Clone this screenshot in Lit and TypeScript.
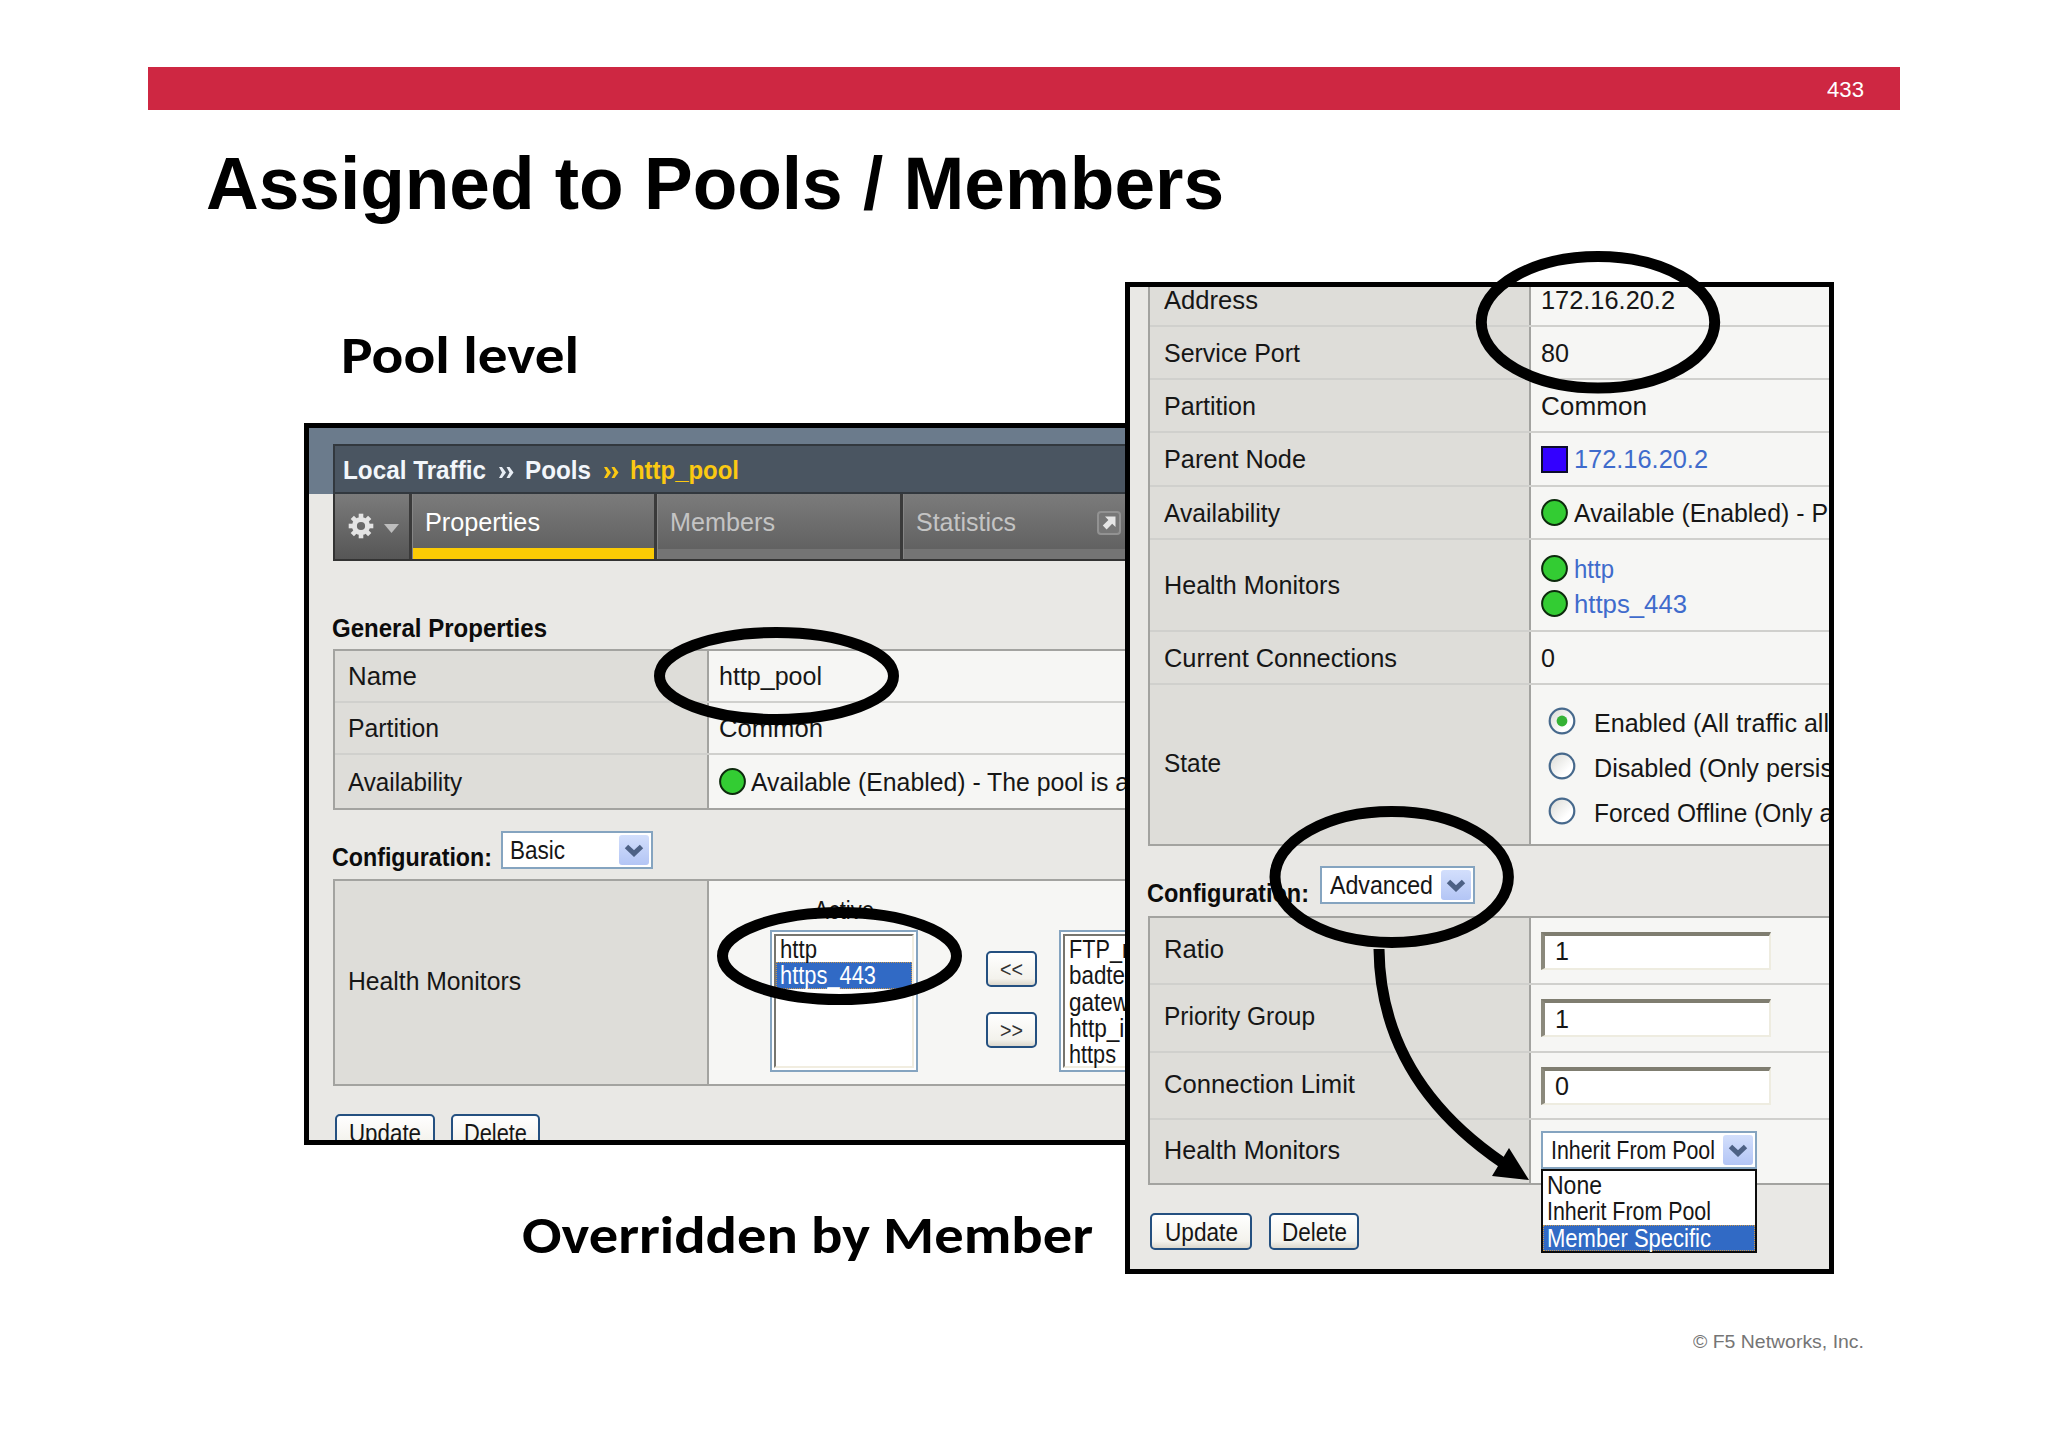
import { LitElement, html, css, svg } from "lit";
import { customElement, property } from "lit/decorators.js";

/** A single line of text condensed or stretched to an exact advance width. */
@customElement("fit-text")
class FitText extends LitElement {
  static styles = css`
    :host { display: inline-block; white-space: nowrap; flex: none; }
    .line { display: inline-block; transform-origin: 0 50%; white-space: pre; }
  `;
  @property({ type: Number }) w = 0;
  @property() text = "";
  render() {
    return html`<span class="line">${this.text}</span>`;
  }
  updated() {
    const line = this.renderRoot.querySelector(".line") as HTMLElement;
    line.style.transform = "none";
    const natural = line.getBoundingClientRect().width;
    this.style.width = `${this.w}px`;
    if (natural > 0) line.style.transform = `scaleX(${this.w / natural})`;
  }
}

const t = (text: string, w: number) => html`<fit-text .text=${text} .w=${w}></fit-text>`;

const green = html`<svg class="dot" width="27" height="27" viewBox="0 0 27 27">
  <circle cx="13.5" cy="13.5" r="12.4" fill="#33cc33" stroke="#0d2a0d" stroke-width="2" />
</svg>`;
const square = html`<svg class="dot" width="27" height="27" viewBox="0 0 27 27">
  <rect x="1" y="1" width="25" height="25" fill="#3300ff" stroke="#0c0c2c" stroke-width="2" />
</svg>`;
const chevron = html`<span class="drop"><svg width="30" height="30" viewBox="0 0 30 30">
  <path d="M7.5 11.5 L15 18.5 L22.5 11.5" fill="none" stroke="#4d6185" stroke-width="5" />
</svg></span>`;

const teeth = [0, 45, 90, 135, 180, 225, 270, 315];
const gear = html`<svg width="26" height="26" viewBox="-13 -13 26 26">
  ${teeth.map((a) => svg`<rect x="-2.3" y="-12.3" width="4.6" height="6" fill="#e4e4e4" transform="rotate(${a})" />`)}
  <circle r="6.6" fill="none" stroke="#e4e4e4" stroke-width="5" />
</svg>`;
const popout = html`<svg width="24" height="24" viewBox="0 0 24 24">
  <rect x="1" y="1" width="22" height="22" rx="3" fill="#777" stroke="#929292" stroke-width="2" />
  <path d="M8 5.5 H18.5 V16 L15.2 12.8 L9.6 18.4 L5.8 14.6 L11.4 9 Z" fill="#e6e6e6" />
</svg>`;

const radio = (on: boolean) => html`<svg class="radio" width="28" height="28" viewBox="0 0 28 28">
  <defs>
    <linearGradient id="g" x1="0" y1="0" x2="1" y2="1">
      <stop offset="0" stop-color="#d9d9d4" /><stop offset="0.7" stop-color="#ffffff" />
    </linearGradient>
  </defs>
  <circle cx="14" cy="14" r="12.3" fill="url(#g)" stroke="#47698c" stroke-width="2.2" />
  ${on ? svg`<circle cx="14" cy="14" r="5.4" fill="#35b235" />` : ""}
</svg>`;

const row = (size: string, label: unknown, value: unknown) => html`
  <div class="row ${size}"><div class="key">${label}</div><div class="val">${value}</div></div>
`;

@customElement("app-root")
class AppRoot extends LitElement {
  static styles = css`
    :host { display: block; }
    * { box-sizing: border-box; }
    svg { display: block; flex: none; }
    .slide {
      position: relative; width: 2048px; height: 1447px; overflow: hidden; background: #fff;
      display: flex; flex-direction: column; color: #000;
      font-family: "Liberation Sans", Arial, sans-serif;
    }
    .bar {
      margin: 67px 148px 0; height: 43px; padding-right: 36px; background: #ce2742; color: #fff;
      display: flex; align-items: center; justify-content: flex-end; font-size: 22px; line-height: 43px;
      flex: none; padding-top: 1px;
    }
    .title { margin: 33px 0 0 206px; height: 80px; font-size: 75px; line-height: 80px; font-weight: 700; flex: none; }
    .stage { display: flex; align-items: flex-start; margin: 59px 0 0 304px; height: 992px; flex: none; }
    .left { width: 821px; display: flex; flex-direction: column; }
    .caption { font-family: Carlito, Lato, "Open Sans", sans-serif; font-weight: 700; font-size: 53px; line-height: 60px; height: 60px; }
    .caption-pool { margin: 43px 0 38px 37px; }
    .caption-member { margin: 60px 0 0 218px; }
    .footer { margin: 56px 184px 0 auto; font-size: 19px; line-height: 24px; color: #757575; }

    .panel {
      border: 5px solid #000; background: #e9e8e5; overflow: hidden; flex: none;
      font-size: 26.5px; line-height: 30px; color: #161616;
    }
    .pool { height: 722px; border-right: 0; }
    .member { width: 709px; height: 992px; padding-left: 18px; }

    .band { height: 66px; padding: 16px 0 0 24px; background: #6b7b8c; }
    .crumbs {
      height: 50px; border: 2px solid #32383e; border-right: 0; background: #4a5561; color: #f2f6fb;
      font-weight: 700; font-size: 26px; display: flex; align-items: center; padding: 1px 0 0 8px;
    }
    .crumbs .here { color: #fbc912; }
    .sep { margin: 0 11px 0 12px; display: flex; padding-top: 5px; }
    .tabs { margin-left: 24px; height: 67px; border: 2px solid #333; border-top: 0; border-right: 0; display: flex; }
    .tab {
      height: 65px; background: linear-gradient(#7b7b7b, #626262 54px, #626262 55px, #747474 55px);
      border-right: 3px solid #3a3a3a; padding: 13px 0 0 12px; color: #c4c4c4; flex: none; display: flex;
      border-left: 1px solid #858585;
    }
    .tab.gear { width: 77px; padding: 19px 0 0 13px; align-items: flex-start; border-left: 0;
      background: linear-gradient(#7b7b7b, #565656); }
    .tab.on { width: 245px; color: #fff; background: linear-gradient(#7b7b7b, #626262 54px, #fbcb04 54px); }
    .tab.mid { width: 246px; }
    .tab.last { width: 240px; border-right: 0; }
    .tri { margin: 11px 0 0 10px; }
    .popout { margin: 4px 0 0 81px; }

    .heading { font-weight: 700; font-size: 26px; color: #0c0c0c; }
    .gp { margin: 52px 0 6px 23px; height: 30px; }
    .table { border: 2px solid #a3a3a0; border-right: 0; background: #f6f6f4; }
    .pool .table { margin-left: 24px; }
    .member .first { border-top: 0; }
    .row { display: flex; border-bottom: 2px solid #d0d0cd; }
    .row:last-child { border-bottom: 0; }
    .key { background: #deddd9; border-right: 2px solid #a3a3a0; display: flex; align-items: center; flex: none; padding-left: 13px; }
    .pool .key { width: 374px; }
    .member .key { width: 381px; padding-left: 14px; }
    .val { flex: 1; min-width: 0; display: flex; align-items: center; padding-left: 10px; overflow: hidden; white-space: nowrap; }
    .link { color: #3f6bcc; display: inline-flex; }
    .dot { margin-right: 6px; }
    .pool .val .dot { margin-right: 5px; }
    .h52 { height: 52px; } .h53 { height: 53px; } .h54 { height: 54px; } .h92 { height: 92px; } .h159 { height: 159px; }
    .h40 { height: 40px; } .h68 { height: 68px; } .h67 { height: 67px; } .h63 { height: 63px; } .h203 { height: 203px; }
    .h40 > div { padding-bottom: 12px; }
    .h159 .key, .h203 .key, .h67 .key, .h68 .key { padding-bottom: 4px; }
    .h63 > div { padding-bottom: 3px; }
    .stack { display: flex; flex-direction: column; gap: 8px; padding-top: 2px; }
    .line { display: flex; align-items: center; height: 27px; }
    .radios { display: flex; flex-direction: column; gap: 17px; padding: 2px 0 0 7px; }
    .opt { display: flex; height: 28px; }
    .radio { margin-right: 18px; }
    .opt fit-text { padding-top: 1px; }

    .config { display: flex; height: 69px; padding: 21px 0 0 23px; gap: 9px; }
    .config .heading { padding-top: 11px; }
    .member .config { height: 70px; padding: 20px 0 0 0; gap: 11px; margin-left: -1px; }
    .member .config .heading { padding-top: 12px; }
    .select {
      height: 38px; background: #fff; border: 2px solid #85a4c0; display: flex; align-items: center;
      justify-content: space-between; padding: 0 2px 0 8px; flex: none;
    }
    .drop { width: 30px; height: 30px; border-radius: 3px; background: linear-gradient(#d3dffc, #b3c5f5); flex: none; }
    .s-basic { width: 152px; padding-left: 7px; }
    .s-adv { width: 155px; }
    .s-inherit { width: 216px; }
    .picker { display: flex; align-items: flex-start; height: 203px; padding-left: 51px; }
    .active { width: 148px; display: flex; flex-direction: column; align-items: center; padding-top: 14px; }
    .list { width: 148px; height: 142px; border: 2px solid #85a4c0; background: #fff; padding: 2px; flex: none; }
    .active .list { margin-top: 5px; }
    .available { margin: 49px 0 0 22px; }
    .well { height: 134px; border: 2px solid #77756f; border-right-color: #f1ede0; border-bottom-color: #f1ede0; line-height: 26.3px; }
    .item { height: 26.3px; padding-left: 4px; display: flex; }
    .picked { background: #316ac5; color: #fff; outline: 1px dotted #c9974a; outline-offset: -1px; }
    .moves { display: flex; flex-direction: column; gap: 25px; margin: 70px 0 0 68px; }
    .btn {
      height: 37px; border: 2.5px solid #245080; border-radius: 5px; display: flex; align-items: center; justify-content: center;
      background: linear-gradient(#fff, #f3f2ec 80%, #dcd8cd); flex: none;
    }
    .move { width: 51px; height: 36px; font-size: 22px; color: #333; padding-top: 2px; }
    .buttons { display: flex; gap: 16px; }
    .pool .buttons { margin: 28px 0 0 26px; }
    .member .buttons { margin: 28px 0 0 2px; gap: 17px; }
    .b-up { width: 100px; } .b-del { width: 89px; }
    .member .b-up { width: 102px; } .member .b-del { width: 90px; }
    .field {
      width: 230px; height: 38px; background: #fff; border: 2px solid #eeece0; border-top: 4px solid #7f7d70;
      border-left: 4px solid #8b897c; padding: 0 0 1px 10px; display: flex; align-items: center;
    }
    .combo { position: relative; }
    .menu { position: absolute; left: 0; top: 38px; width: 216px; height: 84px; border: 2px solid #0c0c0c; background: #fff; padding-top: 1px; }
    .menu .item { padding-left: 4px; line-height: 27px; }
    .open { overflow: visible; }
    .marks { position: absolute; left: 0; top: 0; }
  `;

  private poolPanel() {
    return html`<section class="panel pool">
      <div class="band">
        <div class="crumbs">
          ${t("Local Traffic", 143)}
          <span class="sep"><svg width="16" height="15" viewBox="0 0 16 15"><path d="M1 2 H4 L8 7.5 L4 13 H1 L4 7.5Z M8.5 2 H11.5 L15.5 7.5 L11.5 13 H8.5 L11.5 7.5Z" fill="#e8eef5" /></svg></span>
          ${t("Pools", 66)}
          <span class="sep"><svg width="16" height="15" viewBox="0 0 16 15"><path d="M1 2 H4 L8 7.5 L4 13 H1 L4 7.5Z M8.5 2 H11.5 L15.5 7.5 L11.5 13 H8.5 L11.5 7.5Z" fill="#fbc912" /></svg></span>
          <span class="here">${t("http_pool", 109)}</span>
        </div>
      </div>
      <div class="tabs">
        <div class="tab gear">${gear}<svg class="tri" width="15" height="9" viewBox="0 0 15 9"><path d="M0 0 H15 L7.5 9Z" fill="#bdbdbd" /></svg></div>
        <div class="tab on">${t("Properties", 115)}</div>
        <div class="tab mid">${t("Members", 105)}</div>
        <div class="tab last">${t("Statistics", 100)}<span class="popout">${popout}</span></div>
      </div>
      <div class="heading gp">${t("General Properties", 215)}</div>
      <div class="table">
        ${row("h52", t("Name", 69), t("http_pool", 103))}
        ${row("h52", t("Partition", 91), t("Common", 104))}
        ${row("h53", t("Availability", 114), html`${green}${t("Available (Enabled) - The pool is a", 378)}`)}
      </div>
      <div class="config">
        <span class="heading">${t("Configuration:", 160)}</span>
        <div class="select s-basic">${t("Basic", 55)}${chevron}</div>
      </div>
      <div class="table">
        ${row("h203", t("Health Monitors", 173), html`
          <div class="picker">
            <div class="active">
              ${t("Active", 60)}
              <div class="list"><div class="well">
                <div class="item">${t("http", 37)}</div>
                <div class="item picked">${t("https_443", 96)}</div>
              </div></div>
            </div>
            <div class="moves">
              <div class="btn move">${t("<<", 23)}</div>
              <div class="btn move">${t(">>", 23)}</div>
            </div>
            <div class="list available"><div class="well">
              <div class="item">${t("FTP_m", 71)}</div>
              <div class="item">${t("badte", 56)}</div>
              <div class="item">${t("gatew", 60)}</div>
              <div class="item">${t("http_in", 68)}</div>
              <div class="item">${t("https", 47)}</div>
            </div></div>
          </div>`)}
      </div>
      <div class="buttons">
        <div class="btn b-up">${t("Update", 72)}</div>
        <div class="btn b-del">${t("Delete", 63)}</div>
      </div>
    </section>`;
  }

  private memberPanel() {
    return html`<section class="panel member">
      <div class="table first">
        ${row("h40", t("Address", 94), t("172.16.20.2", 134))}
        ${row("h53", t("Service Port", 136), t("80", 28))}
        ${row("h53", t("Partition", 92), t("Common", 106))}
        ${row("h54", t("Parent Node", 142), html`${square}<span class="link">${t("172.16.20.2", 134)}</span>`)}
        ${row("h53", t("Availability", 116), html`${green}${t("Available (Enabled) - P", 254)}`)}
        ${row("h92", t("Health Monitors", 176), html`<div class="stack link">
          <div class="line">${green}${t("http", 40)}</div>
          <div class="line">${green}${t("https_443", 113)}</div>
        </div>`)}
        ${row("h53", t("Current Connections", 233), t("0", 14))}
        ${row("h159", t("State", 57), html`<div class="radios">
          <div class="opt">${radio(true)}${t("Enabled (All traffic all", 235)}</div>
          <div class="opt">${radio(false)}${t("Disabled (Only persis", 239)}</div>
          <div class="opt">${radio(false)}${t("Forced Offline (Only a", 239)}</div>
        </div>`)}
      </div>
      <div class="config">
        <span class="heading">${t("Configuration:", 162)}</span>
        <div class="select s-adv">${t("Advanced", 103)}${chevron}</div>
      </div>
      <div class="table">
        ${row("h67", t("Ratio", 60), html`<div class="field">${t("1", 14)}</div>`)}
        ${row("h68", t("Priority Group", 151), html`<div class="field">${t("1", 14)}</div>`)}
        ${row("h67", t("Connection Limit", 191), html`<div class="field">${t("0", 14)}</div>`)}
        <div class="row h63">
          <div class="key">${t("Health Monitors", 176)}</div>
          <div class="val open"><div class="combo">
            <div class="select s-inherit">${t("Inherit From Pool", 164)}${chevron}</div>
            <div class="menu">
              <div class="item">${t("None", 55)}</div>
              <div class="item">${t("Inherit From Pool", 164)}</div>
              <div class="item picked">${t("Member Specific", 164)}</div>
            </div>
          </div></div>
        </div>
      </div>
      <div class="buttons">
        <div class="btn b-up">${t("Update", 73)}</div>
        <div class="btn b-del">${t("Delete", 65)}</div>
      </div>
    </section>`;
  }

  render() {
    return html`<main class="slide">
      <div class="bar">${t("433", 37)}</div>
      <div class="title">${t("Assigned to Pools / Members", 1018)}</div>
      <div class="stage">
        <div class="left">
          <div class="caption caption-pool">${t("Pool level", 238)}</div>
          ${this.poolPanel()}
          <div class="caption caption-member">${t("Overridden by Member", 571)}</div>
        </div>
        ${this.memberPanel()}
      </div>
      <div class="footer">${t("© F5 Networks, Inc.", 171)}</div>
      <svg class="marks" width="2048" height="1447" viewBox="0 0 2048 1447" fill="none" stroke="#000" stroke-width="11">
        <ellipse cx="776.5" cy="676" rx="117" ry="43.5" />
        <ellipse cx="839.5" cy="956" rx="117" ry="43.5" />
        <ellipse cx="1598" cy="322.3" rx="116.7" ry="65.7" />
        <ellipse cx="1391.7" cy="877" rx="116.7" ry="65.5" />
        <path d="M1379 949 C1380 1040 1425 1110 1503 1163" />
        <path d="M1529 1180 L1509 1148 L1492 1176 Z" fill="#000" stroke="none" />
      </svg>
    </main>`;
  }
}
